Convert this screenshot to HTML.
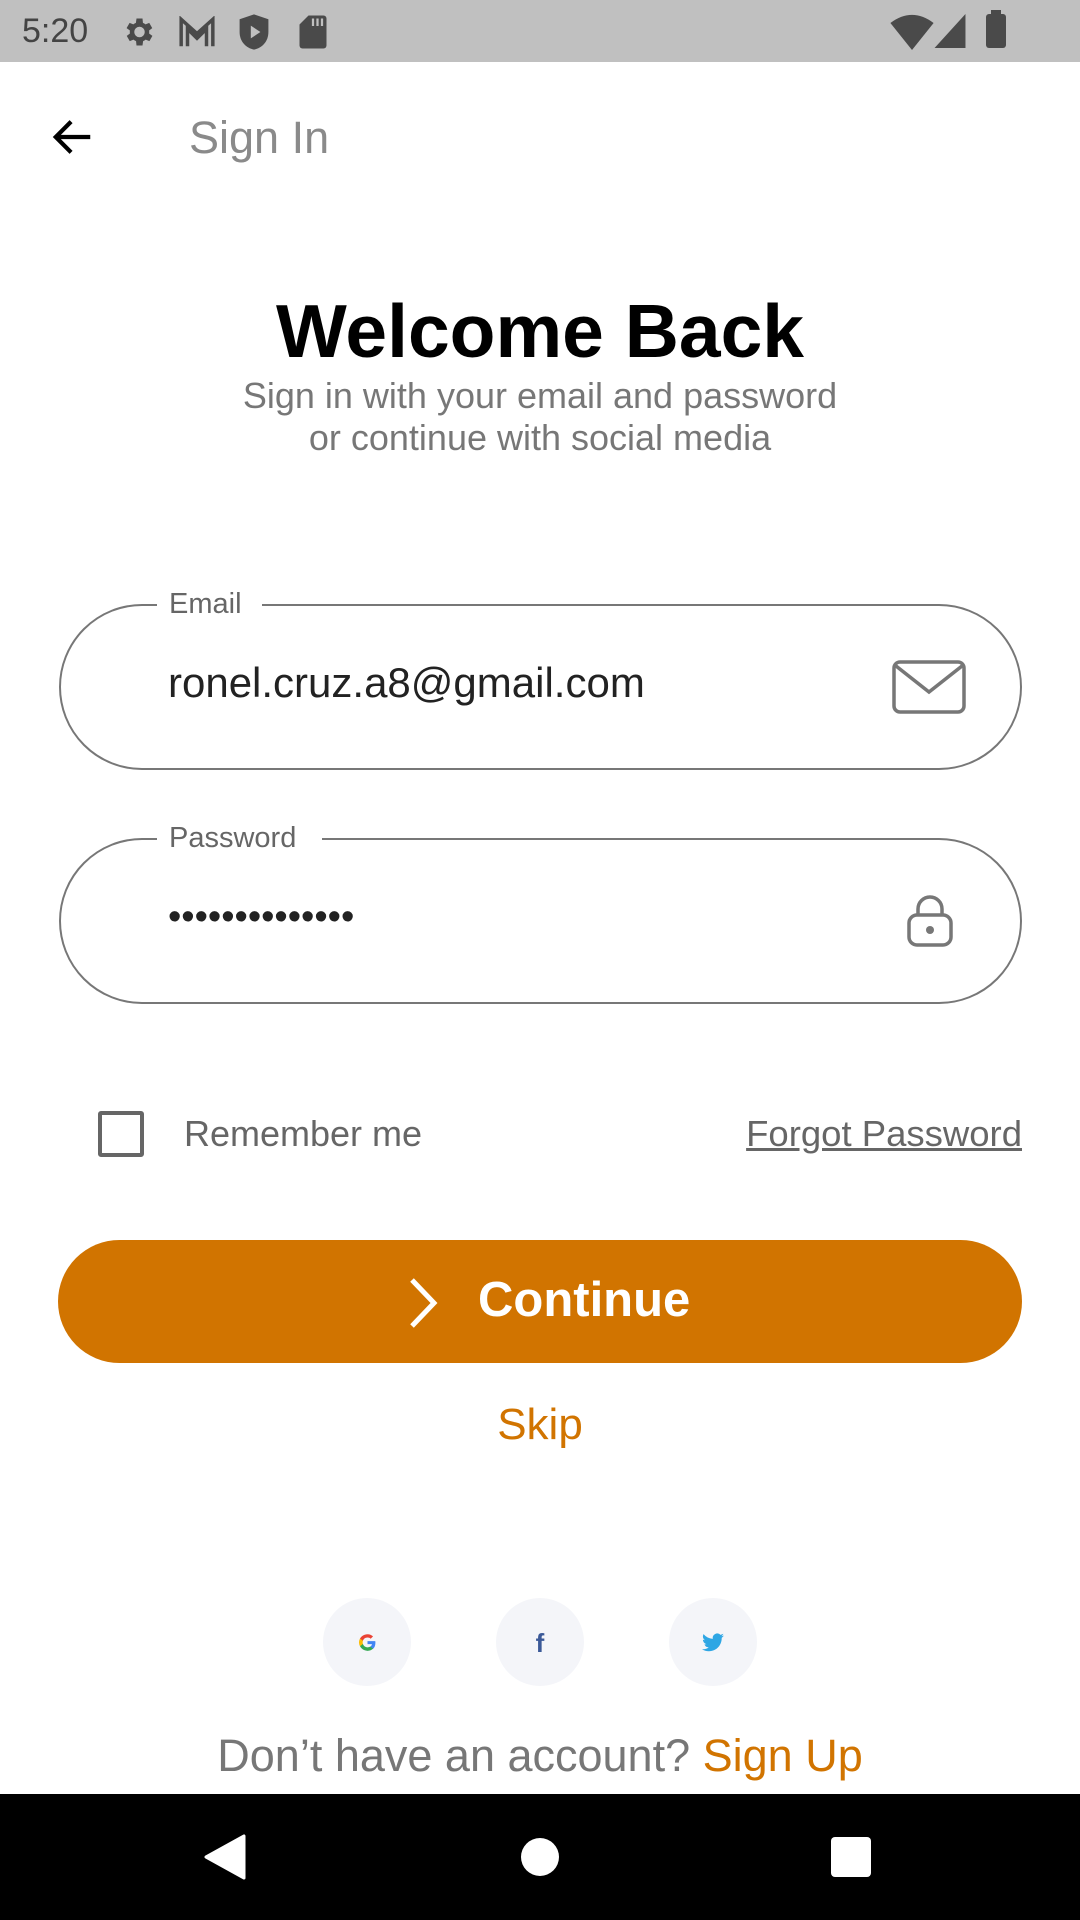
<!DOCTYPE html>
<html><head><meta charset="utf-8"><style>
*{margin:0;padding:0;box-sizing:border-box}
body{width:1080px;height:1920px;position:relative;background:#fff;font-family:"Liberation Sans",Roboto,sans-serif;overflow:hidden}
.abs{position:absolute}
.status{left:0;top:0;width:1080px;height:62px;background:#c0c0c0}
.field{border:2px solid #777;border-radius:84px;background:#fff}
.lbl{background:#fff;color:#666;font-size:29px;padding:0 12px;line-height:32px}
.nav{left:0;top:1794px;width:1080px;height:126px;background:#000}
.circ{width:88px;height:88px;border-radius:50%;background:#f4f5f9;top:1598px}
</style></head><body>
<div class="abs status">
  <div class="abs" style="left:22px;top:12px;font-size:34px;color:#444">5:20</div>
  <svg class="abs" style="left:120px;top:14px" width="36" height="36" viewBox="0 0 24 24"><path fill="#4a4a4a" d="M19.4 13a7.5 7.5 0 000-2l2.1-1.6-2-3.5-2.5 1a7 7 0 00-1.7-1L15 3h-4l-.4 2.9a7 7 0 00-1.7 1l-2.5-1-2 3.5L6.6 11a7.5 7.5 0 000 2l-2.1 1.6 2 3.5 2.5-1a7 7 0 001.7 1L11 21h4l.4-2.9a7 7 0 001.7-1l2.5 1 2-3.5zM13 15.5A3.5 3.5 0 1113 8.5a3.5 3.5 0 010 7z"/></svg>
  <svg class="abs" style="left:178px;top:16px" width="38" height="32" viewBox="0 0 24 20"><path fill="none" stroke="#4a4a4a" stroke-width="2.2" d="M2 19V2l10 9 10-9v17M6 19V8l6 6 6-6v11"/></svg>
  <svg class="abs" style="left:238px;top:12px" width="32" height="40" viewBox="0 0 20 24"><path fill="#4a4a4a" d="M10 1l9 3v8c0 6-4 10-9 11C5 22 1 18 1 12V4z"/><path fill="#c0c0c0" d="M8 8v8l6-4z"/></svg>
  <svg class="abs" style="left:298px;top:14px" width="30" height="36" viewBox="0 0 20 24"><path fill="#4a4a4a" d="M7 1h10a2 2 0 012 2v18a2 2 0 01-2 2H3a2 2 0 01-2-2V7z"/><path stroke="#c0c0c0" stroke-width="1.5" d="M10 3v5M13 3v5M16 3v5"/></svg>
  <svg class="abs" style="left:890px;top:14px" width="44" height="36" viewBox="0 0 24 20"><path fill="#4a4a4a" d="M0 5Q12-4 24 5L12 20z"/></svg>
  <svg class="abs" style="left:934px;top:14px" width="32" height="34" viewBox="0 0 20 22"><path fill="#4a4a4a" d="M20 0v22H0z"/></svg>
  <div class="abs" style="left:986px;top:14px;width:20px;height:34px;background:#4a4a4a;border-radius:3px"></div>
  <div class="abs" style="left:991px;top:10px;width:10px;height:6px;background:#4a4a4a"></div>
</div>
<svg class="abs" style="left:50px;top:114px" width="46" height="46" viewBox="0 0 24 24"><path fill="none" stroke="#000" stroke-width="2.2" d="M21 12H4M11 4l-8 8 8 8"/></svg>
<div class="abs" style="left:189px;top:112px;font-size:45px;color:#8a8a8a">Sign In</div>
<div class="abs" style="left:0;width:1080px;top:288px;text-align:center;font-size:75px;font-weight:bold;color:#000">Welcome Back</div>
<div class="abs" style="left:0;width:1080px;top:375px;text-align:center;font-size:36px;line-height:42px;color:#777">Sign in with your email and password<br>or continue with social media</div>

<div class="abs field" style="left:59px;top:604px;width:963px;height:166px"></div>
<div class="abs lbl" style="left:157px;top:588px;padding-right:20px">Email</div>
<div class="abs" style="left:168px;top:659px;font-size:42px;color:#222">ronel.cruz.a8@gmail.com</div>
<svg class="abs" style="left:892px;top:660px" width="74" height="54" viewBox="0 0 74 54"><rect x="2" y="2" width="70" height="50" rx="6" fill="none" stroke="#777" stroke-width="3.5"/><path d="M4 6l33 26 33-26" fill="none" stroke="#777" stroke-width="3.5"/></svg>

<div class="abs field" style="left:59px;top:838px;width:963px;height:166px"></div>
<div class="abs lbl" style="left:157px;top:822px;padding-right:26px">Password</div>
<div class="abs" style="left:168px;top:896px;font-size:38px;color:#222">••••••••••••••</div>
<svg class="abs" style="left:906px;top:893px" width="48" height="54" viewBox="0 0 48 54"><rect x="3" y="22" width="42" height="30" rx="8" fill="none" stroke="#777" stroke-width="3.5"/><path d="M12 22v-6a12 12 0 0124 0v6" fill="none" stroke="#777" stroke-width="3.5"/><circle cx="24" cy="37" r="4" fill="#777"/></svg>

<div class="abs" style="left:98px;top:1111px;width:46px;height:46px;border:4px solid #666;border-radius:3px"></div>
<div class="abs" style="left:184px;top:1113px;font-size:36px;color:#666">Remember me</div>
<div class="abs" style="right:58px;top:1113px;font-size:36.5px;color:#666;text-decoration:underline">Forgot Password</div>

<div class="abs" style="left:58px;top:1240px;width:964px;height:123px;background:#d17400;border-radius:62px"></div>
<svg class="abs" style="left:404px;top:1276px" width="38" height="54" viewBox="0 0 38 54"><path d="M8 4l22 23L8 50" fill="none" stroke="#fff" stroke-width="5"/></svg>
<div class="abs" style="left:478px;top:1272px;font-size:49px;font-weight:bold;color:#fff">Continue</div>
<div class="abs" style="left:0;width:1080px;top:1400px;text-align:center;font-size:44px;color:#d17400">Skip</div>

<div class="abs circ" style="left:323px"><svg class="abs" style="left:35px;top:35px" width="19" height="19" viewBox="0 0 48 48"><path fill="#4285F4" d="M44 24.5c0-1.6-.1-2.8-.4-4H24v7.5h11.3c-.5 2.7-2 5-4.4 6.6v5.5h7.1c4.1-3.8 6-9.4 6-15.6z"/><path fill="#34A853" d="M24 45c5.9 0 10.9-2 14-5.4l-7.1-5.5c-1.9 1.3-4.3 2.1-6.9 2.1-5.4 0-10-3.6-11.6-8.6H5v5.7C8.5 40.3 15.7 45 24 45z"/><path fill="#FBBC05" d="M12.4 27.6a12.7 12.7 0 010-7.9V14H5a21 21 0 000 19.4z"/><path fill="#EA4335" d="M24 11.4c3 0 5.8 1 8 3.1l6-6C34.9 5.6 29.9 3 24 3 15.7 3 8.5 7.7 5 14l7.4 5.7C14 14.9 18.6 11.4 24 11.4z"/></svg></div>
<div class="abs circ" style="left:496px"><div class="abs" style="left:0;width:88px;top:30px;text-align:center;font-size:26px;font-weight:bold;color:#3b5998">f</div></div>
<div class="abs circ" style="left:669px"><svg class="abs" style="left:33px;top:35px" width="22" height="19" viewBox="0 0 24 20"><path fill="#2ea6e4" d="M24 2.4a9.8 9.8 0 01-2.8.8A4.9 4.9 0 0023.3.5a9.9 9.9 0 01-3.1 1.2A4.9 4.9 0 0011.8 6 14 14 0 011.7.9a4.9 4.9 0 001.5 6.6A4.9 4.9 0 011 6.9a4.9 4.9 0 003.9 4.9 4.9 4.9 0 01-2.2.1 4.9 4.9 0 004.6 3.4A9.9 9.9 0 010 17.3 14 14 0 007.5 19.5c9.1 0 14-7.5 14-14v-.6A10 10 0 0024 2.4z"/></svg></div>

<div class="abs" style="left:0;width:1080px;top:1730px;text-align:center;font-size:45px;color:#777">Don’t have an account? <span style="color:#d17400">Sign Up</span></div>

<div class="abs nav">
  <svg class="abs" style="left:204px;top:40px" width="42" height="46" viewBox="0 0 42 46"><path d="M40 2v42L2 23z" fill="#fff" stroke="#fff" stroke-width="3" stroke-linejoin="round"/></svg>
  <div class="abs" style="left:521px;top:44px;width:38px;height:38px;border-radius:50%;background:#fff"></div>
  <div class="abs" style="left:831px;top:43px;width:40px;height:40px;border-radius:4px;background:#fff"></div>
</div>
</body></html>
